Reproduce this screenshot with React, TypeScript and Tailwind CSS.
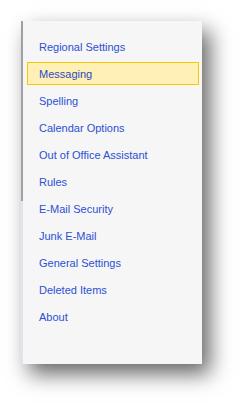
import React from "react";

const items = [
  "Regional Settings",
  "Messaging",
  "Spelling",
  "Calendar Options",
  "Out of Office Assistant",
  "Rules",
  "E-Mail Security",
  "Junk E-Mail",
  "General Settings",
  "Deleted Items",
  "About",
];

export default function App() {
  const selected = "Messaging";
  return (
    <div className="w-[244px] h-[406px] bg-white pt-[21px] pl-[21px]" style={{ fontFamily: "Tahoma, 'Liberation Sans', Arial, sans-serif" }}>
      {/* Options panel */}
      <div className="flex w-[181px] h-[343px] bg-[#f6f6f6] shadow-[8px_10px_20px_rgba(0,0,0,0.6)]">
        <div className="flex flex-col w-[2px] shrink-0">
          <div className="h-[180px] bg-[#9ca1a8]" />
          <div className="flex-1 bg-[#dfe5ee]" />
        </div>
        <ul className="flex flex-col gap-[4px] pt-[14px] pl-[4px] pr-[3px] w-full">
          {items.map((label) => (
            <li
              key={label}
              className={
                label === selected
                  ? "h-[23px] flex items-center pl-[11px] pt-[1px] border border-[#f7c900] bg-[#fff0b5] text-[11px] text-[#2b4bc4]"
                  : "h-[23px] flex items-center pl-[12px] pt-[1px] text-[11px] text-[#2c50d4]"
              }
            >
              {label}
            </li>
          ))}
        </ul>
      </div>
    </div>
  );
}
